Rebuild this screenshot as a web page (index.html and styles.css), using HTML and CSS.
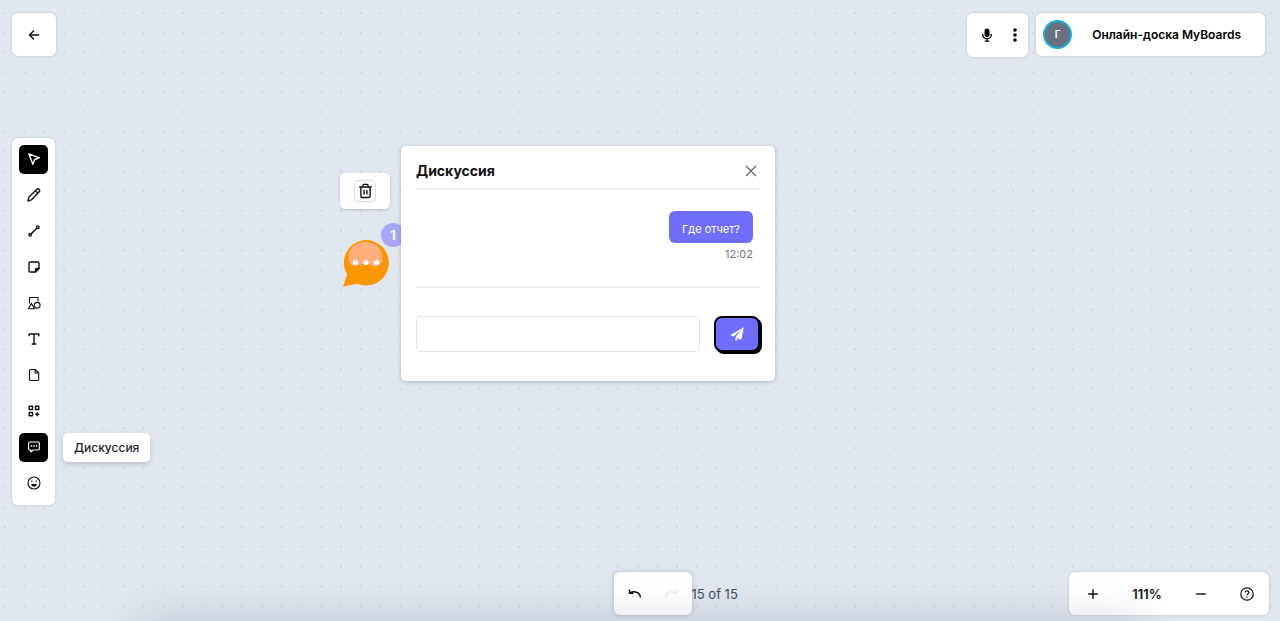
FILE: index.html
```html
<!DOCTYPE html>
<html lang="ru">
<head>
    <meta charset="UTF-8">
    <meta name="viewport" content="width=device-width, initial-scale=1.0">
    <title>Онлайн-доска MyBoards</title>
    <link rel="stylesheet" href="styles.css">
</head>
<body>
    <div class="app">
        <div class="canvas">
            <svg class="grid" width="100%" height="100%" aria-hidden="true">
                <defs>
                    <pattern id="dots" width="20" height="20" patternUnits="userSpaceOnUse" patternTransform="translate(-5 3) scale(0.9885)">
                        <circle cx="10.1" cy="10.3" r="1" fill="#c9ced8"/>
                    </pattern>
                </defs>
                <rect width="100%" height="100%" fill="url(#dots)"/>
            </svg>

            <div class="note-menu">
                <button type="button" class="delete-btn" aria-label="Удалить">
                    <svg width="15" height="16" viewBox="0 0 15 16" fill="none" stroke="#111" stroke-width="1.4" stroke-linejoin="round">
                        <path d="M1.2 4h12.6M5 4V2.2c0-.5.3-.8.8-.8h3.4c.5 0 .8.3.8.8V4M2.900 4v9c0 .9.5 1.500 1.400 1.500h6.400c.9 0 1.400-.6 1.400-1.500V4M6.100 7v4.500M8.900 7v4.500"/>
                    </svg>
                </button>
            </div>

            <div class="note-pin">
                <svg width="46" height="47" viewBox="0 0 46 47" aria-hidden="true">
                    <path d="M23 0a22.700 22.700 0 1 1-8.500 43.700L0 46.500l4.200-12A22.700 22.700 0 0 1 23 0z" fill="#fb9500"/>
                    <path d="M22.500 2c10 0 17 7 17 15.500c0 6-3 9-7.500 9c-3.500 0-4-2.500-9.500-2.500s-6 2-10 2c-4.500 0-7-3.500-7-8.500C5.500 9 12.500 2 22.500 2z" fill="#ffae7c"/>
                    <circle cx="12.500" cy="22.500" r="2.600" fill="#fff"/>
                    <circle cx="23" cy="22.500" r="2.600" fill="#fff"/>
                    <circle cx="33.500" cy="22.500" r="2.600" fill="#fff"/>
                </svg>
                <span class="badge">1</span>
            </div>
        </div>

        <header class="topbar">
            <button type="button" class="panel back-btn" aria-label="Назад">
                <svg width="12" height="12" viewBox="0 0 12 12" fill="none" stroke="#111" stroke-width="1.5" stroke-linecap="round" stroke-linejoin="round">
                    <path d="M10.700 6H1.500M5.500 2L1.500 6l4 4"/>
                </svg>
            </button>
            <div class="topbar-right">
                <div class="panel call-panel">
                    <button type="button" class="icon-btn" aria-label="Микрофон">
                        <svg width="12" height="14" viewBox="0 0 12 14">
                            <rect x="3.500" y="0.500" width="5" height="8.500" rx="2.500" fill="#000"/>
                            <path d="M1.700 6v.6a4.300 4.300 0 0 0 8.600 0V6M6 11v2M3.800 13.200h4.400" fill="none" stroke="#000" stroke-width="1.300"/>
                        </svg>
                    </button>
                    <button type="button" class="icon-btn" aria-label="Меню">
                        <svg width="4" height="14" viewBox="0 0 4 14">
                            <circle cx="2" cy="2" r="1.800"/>
                            <circle cx="2" cy="7" r="1.800"/>
                            <circle cx="2" cy="12" r="1.800"/>
                        </svg>
                    </button>
                </div>
                <div class="panel board-panel">
                    <span class="avatar">Г</span>
                    <span class="board-name">Онлайн-доска MyBoards</span>
                </div>
            </div>
        </header>

        <main class="workspace">
            <nav class="panel toolbar" aria-label="Инструменты">
                <button type="button" class="tool active" aria-label="Выбор">
                    <svg width="14" height="14" viewBox="0 0 14 14">
                        <path d="M1.800 1.800l10.500 4-4.600 1.700-1.800 4.800z"/>
                    </svg>
                </button>
                <button type="button" class="tool" aria-label="Карандаш">
                    <svg width="14" height="14" viewBox="0 0 14 14">
                        <path d="M.9 13.100l.9-3.800L9.600 1.500c.8-.8 1.800-.8 2.500-.1s.7 1.700-.1 2.500L4.300 11.900z M8.500 2.700l2.500 2.500"/>
                    </svg>
                </button>
                <button type="button" class="tool" aria-label="Линия">
                    <svg width="14" height="14" viewBox="0 0 14 14">
                        <path d="M4 10L10 4"/>
                        <circle cx="3.200" cy="10.800" r="1.300"/>
                        <circle cx="10.800" cy="3.200" r="1.300"/>
                    </svg>
                </button>
                <button type="button" class="tool" aria-label="Стикер">
                    <svg width="14" height="14" viewBox="0 0 14 14">
                        <path d="M3.200 2h7.600c.7 0 1.200.5 1.200 1.200v5.300L8.500 12H3.200C2.500 12 2 11.500 2 10.800V3.200C2 2.500 2.500 2 3.200 2z"/>
                        <path d="M12 8.500H9.700c-.7 0-1.200.5-1.200 1.200V12z" fill="currentColor"/>
                    </svg>
                </button>
                <button type="button" class="tool" aria-label="Фигуры">
                    <svg width="14" height="14" viewBox="0 0 14 14" class="thin">
                        <path d="M2.500 7.500V1.500h8.500v3.800M1.400 12.800l3-5.600 3 5.600z"/>
                        <circle cx="10.200" cy="9.300" r="2.900"/>
                    </svg>
                </button>
                <button type="button" class="tool" aria-label="Текст">
                    <svg width="14" height="14" viewBox="0 0 14 14">
                        <path d="M2.200 4.200V2h9.600v2.200M7 2v10M4.700 12h4.600"/>
                    </svg>
                </button>
                <button type="button" class="tool" aria-label="Документ">
                    <svg width="14" height="14" viewBox="0 0 14 14" class="thin">
                        <path d="M3.700 1.500h4.500l3.500 3.500v6.300c0 .7-.5 1.200-1.200 1.200H3.700c-.7 0-1.200-.5-1.200-1.200V2.700c0-.7.500-1.200 1.200-1.200zM8.200 1.500V5h3.500"/>
                    </svg>
                </button>
                <button type="button" class="tool" aria-label="Виджеты">
                    <svg width="14" height="14" viewBox="0 0 14 14">
                        <path d="M2.200 2.200h3.300v3.300H2.200zM8.500 2.200h3.300v3.300H8.500zM2.200 8.500h3.300v3.300H2.200zM10.200 8.200v4M8.200 10.200h4"/>
                    </svg>
                </button>
                <button type="button" class="tool active" aria-label="Дискуссия">
                    <svg width="14" height="14" viewBox="0 0 14 14" class="thin">
                        <path d="M2.800 2h8.400c.7 0 1.200.5 1.200 1.200v5.600c0 .7-.5 1.200-1.200 1.200H6l-2.200 2V10h-1c-.7 0-1.200-.5-1.200-1.200V3.200C1.600 2.500 2.100 2 2.800 2z"/>
                        <path d="M3.800 6h1.400M6.300 6h1.400M8.800 6h1.400" stroke-width="1.500"/>
                    </svg>
                    <span class="tooltip">Дискуссия</span>
                </button>
                <button type="button" class="tool" aria-label="Эмодзи">
                    <svg width="14" height="14" viewBox="0 0 14 14" class="thin">
                        <circle cx="7" cy="7" r="6"/>
                        <path d="M4.200 8h5.600c-.2 1.700-1.200 2.700-2.800 2.700S4.400 9.700 4.200 8z" fill="currentColor" stroke="none"/>
                        <path d="M4.800 4.600v1.300M9.200 4.600v1.300"/>
                    </svg>
                </button>
            </nav>
        </main>

        <footer class="bottombar">
            <div class="history">
                <div class="panel history-panel">
                    <button type="button" class="icon-btn" aria-label="Отменить">
                        <svg width="14" height="12" viewBox="0 0 14 12" fill="none" stroke="#111" stroke-width="1.400">
                            <path d="M1.500 1.500v3.800h4M1.700 5c2.600-1.800 9.800-2.500 10.800 4.500"/>
                        </svg>
                    </button>
                    <button type="button" class="icon-btn" aria-label="Повторить" disabled>
                        <svg width="14" height="12" viewBox="0 0 14 12" fill="none" stroke="#eeeef0" stroke-width="1.400">
                            <path d="M12.500 1.500v3.800h-4M12.300 5C9.700 3.200 2.500 2.500 1.500 9.500"/>
                        </svg>
                    </button>
                </div>
                <span class="history-count">15 of 15</span>
            </div>
            <div class="panel zoom-panel">
                <button type="button" class="icon-btn" aria-label="Увеличить">
                    <svg width="12" height="12" viewBox="0 0 12 12" fill="none" stroke="#111" stroke-width="1.400">
                        <path d="M6 1.200v9.600M1.200 6h9.600"/>
                    </svg>
                </button>
                <span class="zoom-value">111%</span>
                <button type="button" class="icon-btn" aria-label="Уменьшить">
                    <svg width="12" height="12" viewBox="0 0 12 12" fill="none" stroke="#111" stroke-width="1.400">
                        <path d="M1.200 6h9.600"/>
                    </svg>
                </button>
                <button type="button" class="icon-btn" aria-label="Помощь">
                    <svg width="14" height="14" viewBox="0 0 14 14" fill="none" stroke="#111" stroke-width="1.200">
                        <circle cx="7" cy="7" r="6.200"/>
                        <path d="M5.200 5.500c0-2.300 3.700-2.200 3.700 0 0 1.300-1.900 1.300-1.900 2.700M7 9.400v1.300"/>
                    </svg>
                </button>
            </div>
        </footer>

        <section class="dialog" role="dialog" aria-labelledby="dialog-title">
            <div class="dialog-header">
                <h2 id="dialog-title">Дискуссия</h2>
                <button type="button" class="close-btn" aria-label="Закрыть">
                    <svg width="12" height="12" viewBox="0 0 12 12" stroke="#666" stroke-width="1.300">
                        <path d="M1 1l10 10M11 1L1 11"/>
                    </svg>
                </button>
            </div>
            <div class="messages">
                <p class="message">Где отчет?</p>
                <time class="message-time">12:02</time>
            </div>
            <form class="reply">
                <input type="text" class="reply-input" aria-label="Сообщение">
                <button type="button" class="send-btn" aria-label="Отправить">
                    <svg width="14" height="14" viewBox="0 0 14 14" fill="#fff">
                        <path d="M13.800.2L.3 8l3.300 1.400 7.800-6.900-6 7.800 4.900 2.200c.6.200 1 0 1.200-.6zM5.400 10.800v2.700c0 .5.500.6.800.3l1.600-2z"/>
                    </svg>
                </button>
            </form>
        </section>
    </div>
</body>
</html>
```
FILE: styles.css
```css
* {
    box-sizing: border-box;
}
body {
    margin: 0;
    font-family: Inter, sans-serif;
    font-size: 13px;
    color: #111;
    background-color: #e0e7ef;
}
button {
    display: flex;
    align-items: center;
    justify-content: center;
    padding: 0;
    border: none;
    background: none;
    font-family: inherit;
    color: inherit;
    cursor: pointer;
}
.app {
    position: relative;
    display: flex;
    flex-direction: column;
    height: 100vh;
    padding: 13px 11px 6px 12px;
    overflow: hidden;
}
/* soft shade rising from the bottom edge */
.app::after {
    content: "";
    position: absolute;
    left: 140px;
    right: 140px;
    bottom: -40px;
    height: 40px;
    box-shadow: 0 0 40px rgba(40, 40, 80, 0.18);
    pointer-events: none;
}
.canvas {
    position: absolute;
    inset: 0;
}
.grid {
    display: block;
}
.panel {
    position: relative;
    display: flex;
    align-items: center;
    background-color: #fff;
    border-radius: 6px;
    box-shadow: 0 0 3px rgba(30, 40, 70, 0.2);
}

/* top */
.topbar {
    display: flex;
    justify-content: space-between;
    align-items: flex-start;
    padding-right: 4px;
}
.back-btn {
    width: 44px;
    height: 43px;
    background-color: #fff;
}
.topbar-right {
    display: flex;
    gap: 8px;
}
.call-panel {
    gap: 20px;
    height: 44px;
    padding: 0 11px 0 14px;
}
.board-panel {
    gap: 20px;
    height: 43px;
    padding: 0 24px 0 7px;
}
.avatar {
    width: 29px;
    height: 29px;
    border: 2px solid #17aee0;
    border-radius: 50%;
    background-color: #6b7080;
    color: #fff;
    font-size: 10px;
    font-weight: 600;
    line-height: 25px;
    text-align: center;
}
.board-name {
    font-size: 12px;
    font-weight: 600;
    color: #000;
}

/* tools */
.workspace {
    flex: 1;
    display: flex;
    align-items: center;
    padding-top: 13px;
}
.toolbar {
    flex-direction: column;
    gap: 7px;
    padding: 7px;
}
.tool {
    position: relative;
    width: 29px;
    height: 29px;
    border-radius: 5px;
}
.tool svg {
    fill: none;
    stroke: currentColor;
    stroke-width: 1.4;
    stroke-linejoin: round;
}
.tool .thin {
    stroke-width: 1.1;
}
.tool.active {
    background-color: #000;
    color: #fff;
}
.tooltip {
    position: absolute;
    left: 44px;
    top: 0;
    padding: 0 11px;
    border-radius: 5px;
    background-color: #fff;
    box-shadow: 0 2px 5px rgba(30, 40, 70, 0.2);
    color: #1c1e2b;
    font-size: 12px;
    font-weight: 500;
    line-height: 29px;
}

/* bottom */
.bottombar {
    display: flex;
    justify-content: space-between;
    align-items: center;
}
.history {
    display: flex;
    align-items: center;
    margin-left: calc(50% - 27px);
}
.history-panel {
    gap: 22px;
    height: 43px;
    padding: 0 14px;
    box-shadow: 0 0 5px rgba(30, 40, 70, 0.25);
}
.history-count {
    color: #444b5a;
    font-size: 13px;
}
.zoom-panel {
    height: 43px;
    padding: 0 15px 0 18px;
}
.zoom-value {
    width: 96px;
    font-size: 13px;
    font-weight: 600;
    text-align: center;
}
.zoom-panel .icon-btn:last-child {
    margin-left: 33px;
}

/* comment pin */
.note-menu {
    position: absolute;
    left: 340px;
    top: 173px;
    padding: 7px 14px;
    border-radius: 5px;
    background-color: #fff;
    box-shadow: 0 1px 3px rgba(30, 40, 70, 0.2);
}
.delete-btn {
    width: 22px;
    height: 22px;
    border: 1px solid #ddd;
    border-radius: 4px;
}
.note-pin {
    position: absolute;
    left: 343px;
    top: 240px;
}
.badge {
    position: absolute;
    left: 38px;
    top: -17px;
    width: 24px;
    height: 24px;
    border-radius: 50%;
    background-color: #a8a8f8;
    color: #fff;
    font-size: 13px;
    font-weight: 700;
    line-height: 24px;
    text-align: center;
}

/* discussion window */
.dialog {
    position: absolute;
    left: 401px;
    top: 146px;
    width: 374px;
    padding: 15px 15px 29px;
    border-radius: 5px;
    background-color: #fff;
    box-shadow: 0 1px 4px rgba(30, 40, 70, 0.25);
}
.dialog-header {
    display: flex;
    justify-content: space-between;
    align-items: flex-start;
    height: 29px;
    padding-right: 3px;
    border-bottom: 2px solid #eee;
}
.dialog-header h2 {
    margin: 0;
    font-size: 14px;
    font-weight: 700;
    line-height: 20px;
}
.close-btn {
    height: 20px;
}
.messages {
    display: flex;
    flex-direction: column;
    align-items: flex-end;
    min-height: 98px;
    padding: 21px 7px;
    border-bottom: 2px solid #eee;
}
.message {
    margin: 0;
    padding: 9px 13px 5px;
    border-radius: 6px;
    background-color: #706dfd;
    color: #fff;
    font-size: 11px;
    line-height: 18px;
}
.message-time {
    margin-top: 2px;
    color: #777;
    font-size: 11px;
    line-height: 18px;
}
.reply {
    display: flex;
    gap: 14px;
    margin-top: 28px;
}
.reply-input {
    flex: 1;
    min-width: 0;
    height: 36px;
    padding: 0 10px;
    border: 1px solid #e4e4e4;
    border-radius: 5px;
    background-color: #fff;
    font-family: inherit;
    font-size: 13px;
}
.send-btn {
    width: 46px;
    height: 36px;
    border: 2px solid #000;
    border-radius: 8px;
    background-color: #706dfd;
    box-shadow: 2px 2px 0 #000;
}
```
